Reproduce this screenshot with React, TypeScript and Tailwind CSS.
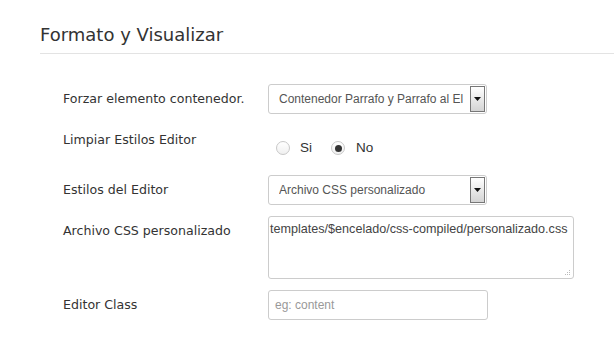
import React from "react";

const labelCls = "w-[205px] shrink-0 pt-[7px] text-[12.6px] leading-[16px] text-[#333]";

const SelectBox = ({ value }: { value: string }) => (
  <div className="relative flex h-[30px] w-[219px] items-center rounded-[3px] border border-[#ccc] bg-white pl-[10px] font-['Liberation_Sans',Arial,sans-serif] text-[12px] text-[#555]">
    <span className="truncate pr-[22px]">{value}</span>
    <div className="absolute right-[1px] top-[1px] flex h-[26px] w-[15px] items-center justify-center border border-[#777] bg-gradient-to-b from-white to-[#d4d4d4]">
      <svg width="7" height="4" viewBox="0 0 7 4">
        <path d="M0 0h7L3.5 4z" fill="#111" />
      </svg>
    </div>
  </div>
);

const Radio = ({ checked }: { checked?: boolean }) => (
  <span className="flex h-[14px] w-[14px] items-center justify-center rounded-full border border-[#c8c8c8] bg-gradient-to-b from-white to-[#f0f0f0]">
    {checked && <span className="h-[7px] w-[7px] rounded-full bg-[#333]" />}
  </span>
);

export default function App() {
  return (
    <div className="h-[341px] w-[614px] bg-white font-['DejaVu_Sans',Verdana,sans-serif]">
      <div className="pl-[40px] pt-[24px]">
        <h2 className="border-b border-[#e3e3e3] pb-[7px] text-[18px] leading-[22px] text-[#333]">
          Formato y Visualizar
        </h2>
      </div>

      <div className="flex flex-col gap-[11px] pl-[63px] pt-[30px]">
        <div className="flex">
          <div className={labelCls}>Forzar elemento contenedor.</div>
          <SelectBox value="Contenedor Parrafo y Parrafo al El" />
        </div>

        <div className="flex h-[39px]">
          <div className={labelCls}>Limpiar Estilos Editor</div>
          <div className="flex items-start gap-[19px] pl-[8px] pt-[16px] font-['Liberation_Sans',Arial,sans-serif] text-[13.5px] text-[#333]">
            <label className="flex items-center gap-[10px]">
              <Radio />
              <span className="leading-[14px]">Si</span>
            </label>
            <label className="flex items-center gap-[11px]">
              <Radio checked />
              <span className="leading-[14px]">No</span>
            </label>
          </div>
        </div>

        <div className="flex">
          <div className={labelCls}>Estilos del Editor</div>
          <SelectBox value="Archivo CSS personalizado" />
        </div>

        <div className="flex">
          <div className={labelCls}>Archivo CSS personalizado</div>
          <div className="relative h-[63px] w-[306px] rounded-[3px] border border-[#ccc] bg-white pl-[1px] pt-[5px] font-['Liberation_Sans',Arial,sans-serif] text-[12.6px] leading-[15px] text-[#444]">
            templates/$encelado/css-compiled/personalizado.css
            <svg className="absolute bottom-[2px] right-[2px]" width="6" height="6" viewBox="0 0 6 6">
              <rect x="4" y="0" width="1" height="1" fill="#bbb" />
              <rect x="2" y="2" width="1" height="1" fill="#bbb" />
              <rect x="4" y="2" width="1" height="1" fill="#bbb" />
              <rect x="0" y="4" width="1" height="1" fill="#bbb" />
              <rect x="2" y="4" width="1" height="1" fill="#bbb" />
              <rect x="4" y="4" width="1" height="1" fill="#bbb" />
            </svg>
          </div>
        </div>

        <div className="flex">
          <div className={labelCls}>Editor Class</div>
          <div className="flex h-[30px] w-[220px] items-center rounded-[3px] border border-[#ccc] bg-white pl-[6px] font-['Liberation_Sans',Arial,sans-serif] text-[12px] text-[#999]">
            eg: content
          </div>
        </div>
      </div>
    </div>
  );
}
